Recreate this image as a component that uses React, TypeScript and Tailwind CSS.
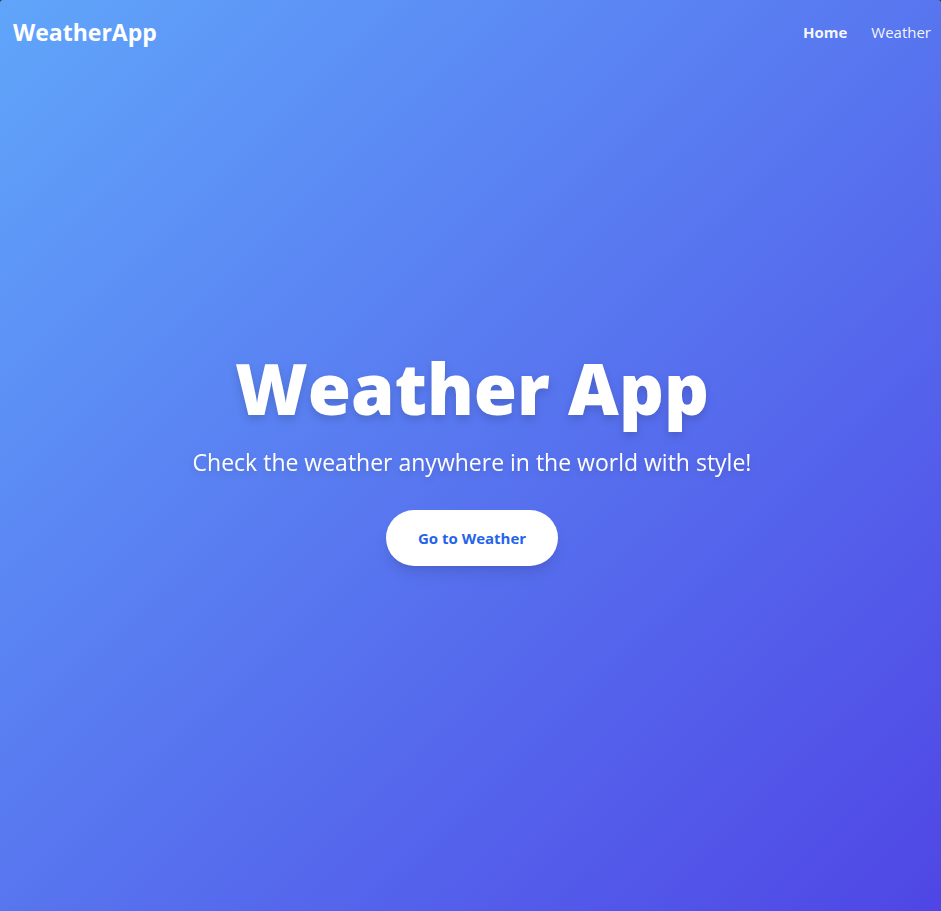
import React from "react";

export default function App() {
  return (
    <div className="bg-[#333333]">
      <div className="flex min-h-screen flex-col rounded-t-[3px] bg-linear-to-br/srgb from-[#60a5fa] to-[#4f46e5] font-['Open_Sans','Noto_Sans',sans-serif] text-white">
        <header className="flex items-center justify-between py-4 pr-2.5 pl-[13px]">
          <a href="#home" className="text-[23px] leading-8 font-bold">
            WeatherApp
          </a>
          <nav className="flex gap-6 text-[15px] leading-8 text-white/95">
            <a href="#home" aria-current="page" className="font-bold">
              Home
            </a>
            <a href="#weather">Weather</a>
          </nav>
        </header>
        <main className="flex flex-1 flex-col items-center justify-center pb-15 pl-[3px] text-center">
          <h1 className="mb-5 text-[70px] leading-[76px] font-extrabold drop-shadow-lg">
            Weather App
          </h1>
          <p className="mb-8 text-[23px] leading-8 drop-shadow-md">
            Check the weather anywhere in the world with style!
          </p>
          <button
            type="button"
            className="rounded-full bg-white px-8 py-4 text-[15px] leading-6 font-bold text-[#2563eb] shadow-lg"
          >
            Go to Weather
          </button>
        </main>
      </div>
    </div>
  );
}
